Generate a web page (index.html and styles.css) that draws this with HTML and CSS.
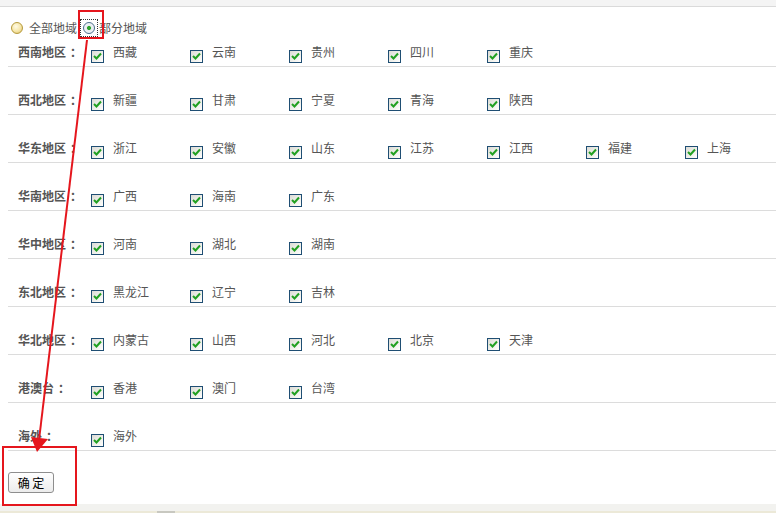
FILE: index.html
```html
<!DOCTYPE html>
<html lang="zh-CN">
<head>
    <meta charset="UTF-8">
    <title>地区选择</title>
    <link rel="stylesheet" href="styles.css">
</head>
<body>
    <div class="topbar"></div>

    <div class="scope">
        <span class="radio radio-off"></span>
        <span class="scope-text">全部地域</span>
        <span class="focus"><span class="radio radio-on"></span></span>
        <span class="scope-text">部分地域</span>
    </div>

    <div id="regions"></div>

    <div class="actions">
        <button type="button" class="btn">确 定</button>
    </div>

    <div class="statusbar"><span class="thumb"></span></div>

    <!-- annotation overlay -->
    <svg class="marks" width="776" height="513" viewBox="0 0 776 513">
        <rect x="79" y="11" width="24" height="27" fill="none" stroke="#e5161d" stroke-width="2"/>
        <rect x="3" y="447" width="73" height="58" fill="none" stroke="#e5161d" stroke-width="2"/>
        <line x1="87" y1="40" x2="39" y2="440" stroke="#e5161d" stroke-width="2"/>
        <polygon points="31,437 48,439 37,452" fill="#e5161d"/>
    </svg>

    <script>
        const regions = [
            { name: "西南地区", items: ["西藏", "云南", "贵州", "四川", "重庆"] },
            { name: "西北地区", items: ["新疆", "甘肃", "宁夏", "青海", "陕西"] },
            { name: "华东地区", items: ["浙江", "安徽", "山东", "江苏", "江西", "福建", "上海"] },
            { name: "华南地区", items: ["广西", "海南", "广东"] },
            { name: "华中地区", items: ["河南", "湖北", "湖南"] },
            { name: "东北地区", items: ["黑龙江", "辽宁", "吉林"] },
            { name: "华北地区", items: ["内蒙古", "山西", "河北", "北京", "天津"] },
            { name: "港澳台", items: ["香港", "澳门", "台湾"] },
            { name: "海外", items: ["海外"] }
        ];

        const tick = '<svg width="9" height="8" viewBox="0 0 9 8"><path d="M1 4 L3.5 6.5 L8 1.5" fill="none" stroke="#21a021" stroke-width="2"/></svg>';

        const list = document.getElementById('regions');
        regions.forEach((r, index) => {
            const row = document.createElement('div');
            row.className = index === 0 ? 'region first' : 'region';
            row.innerHTML = `
                <span class="region-name">${r.name}<span class="colon">：</span></span>
                ${r.items.map(item => `
                    <span class="area"><span class="check">${tick}</span><span class="area-text">${item}</span></span>
                `).join('')}
            `;
            list.appendChild(row);
        });
    </script>
</body>
</html>
```

FILE: styles.css
```css
body {
    margin: 0;
    padding: 0;
    background: #fff;
    font-family: "Noto Sans CJK SC", "Liberation Sans", sans-serif;
    font-size: 12px;
    color: #555;
    width: 776px;
    height: 513px;
    overflow: hidden;
    position: relative;
}
.topbar {
    height: 6px;
    background: #f4f4f4;
    border-bottom: 1px solid #dadada;
}
.scope {
    display: flex;
    align-items: center;
    height: 18px;
    margin-top: 12px;
    padding-left: 11px;
}
.scope-text {
    color: #555;
    line-height: 18px;
}
.radio {
    display: inline-block;
    width: 12px;
    height: 12px;
    border-radius: 50%;
    box-sizing: border-box;
}
.radio-off {
    border: 1px solid #b69a3c;
    background: radial-gradient(circle at 40% 35%, #fffbe6 0%, #f6e6a8 55%, #d8b85a 100%);
    margin-right: 6px;
}
.focus {
    display: inline-flex;
    align-items: center;
    justify-content: center;
    width: 18px;
    height: 18px;
    margin: 0 1px 0 3px;
    border: 1px dotted #333;
    box-sizing: border-box;
}
.radio-on {
    border: 1px solid #4a6c8c;
    background: radial-gradient(circle, #2ea52e 0%, #2ea52e 26%, #e6ecf0 32%, #f8fafb 100%);
}
.region {
    display: flex;
    align-items: center;
    height: 16px;
    margin-left: 8px;
    padding: 25px 0 6px 10px;
    border-bottom: 1px solid #dcdcdc;
}
.region.first {
    padding-top: 7px;
}
.region-name {
    width: 73px;
    font-weight: bold;
    color: #555;
    line-height: 16px;
    flex-shrink: 0;
}
.colon {
    margin-left: 4px;
}
.area {
    display: flex;
    align-items: center;
    width: 99px;
    flex-shrink: 0;
}
.check {
    display: inline-flex;
    align-items: center;
    justify-content: center;
    width: 13px;
    height: 13px;
    box-sizing: border-box;
    border: 1px solid #1f4e73;
    background: linear-gradient(135deg, #dcdcd6 0%, #f4f4f0 70%, #fff 100%);
    margin-top: 8px;
    margin-right: 9px;
}
.area-text {
    color: #555;
    line-height: 16px;
}
.actions {
    padding: 21px 0 0 8px;
    height: 32px;
}
.btn {
    width: 46px;
    height: 21px;
    padding: 0;
    font-family: "Noto Sans CJK SC", sans-serif;
    font-size: 12px;
    color: #000;
    border: 1px solid #8e8e8e;
    border-radius: 3px;
    background: linear-gradient(#ffffff, #ececec);
}
.statusbar {
    position: absolute;
    left: 0;
    right: 0;
    bottom: 0;
    height: 9px;
    background: #f2f2ef;
    border-bottom: 2px solid #ece9d8;
    box-sizing: border-box;
}
.thumb {
    position: absolute;
    left: 157px;
    bottom: -2px;
    width: 18px;
    height: 2px;
    background: #c8c8c0;
}
.marks {
    position: absolute;
    left: 0;
    top: 0;
    pointer-events: none;
}
```
